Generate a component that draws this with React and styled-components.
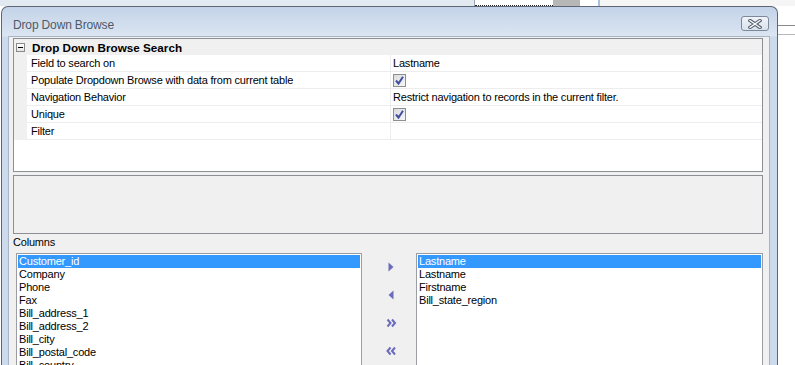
import React from "react";
import styled, { createGlobalStyle } from "styled-components";

const Global = createGlobalStyle`
  html, body { margin: 0; padding: 0; background: #fff; }
  * { box-sizing: border-box; }
`;

const Desktop = styled.div`
  position: relative;
  width: 795px;
  height: 365px;
  overflow: hidden;
  background: #fff;
  font-family: "Liberation Sans", Arial, sans-serif;
`;

const Backdrop = styled.div`
  display: flex;
  flex-direction: column;
`;

const TopStrip = styled.div`
  display: flex;
  height: 6px;
`;

const StripCell = styled.div`
  width: ${(p) => p.$w}px;
  flex: ${(p) => (p.$grow ? 1 : "none")};
  background: ${(p) => p.$bg};
  border-bottom: ${(p) => (p.$dots ? "1px dotted #222" : "none")};
`;

const RightLines = styled.div`
  margin-left: 778px;
  margin-top: 19px;
  height: 10px;
  border-top: 1px solid #8a8a8a;
  border-bottom: 1px solid #b8b8b8;
`;

const Window = styled.div`
  position: absolute;
  left: 1px;
  top: 6px;
  width: 777px;
  height: 372px;
  border: 1px solid #5d6672;
  border-bottom: none;
  border-radius: 7px 7px 0 0;
  background: linear-gradient(
    to bottom,
    #c3d3e8 0px,
    #dbe5f2 29px,
    #ccdaeb 30px,
    #ccdaeb 100%
  );
  display: flex;
  flex-direction: column;
  padding: 0 7px 0 6px;
`;

const TitleBar = styled.div`
  flex: none;
  height: 29px;
  display: flex;
  align-items: flex-start;
  justify-content: space-between;
  padding-left: 5px;
`;

const Title = styled.div`
  margin-top: 11px;
  font-size: 12px;
  line-height: 14px;
  color: #4f5a68;
  letter-spacing: -0.15px;
`;

const CloseButton = styled.div`
  margin-top: 9px;
  margin-right: 1px;
  width: 28px;
  height: 15px;
  border: 1px solid #7d8899;
  border-radius: 3px;
  background: linear-gradient(to bottom, #f1f4f9, #d9e1eb);
  display: flex;
  align-items: center;
  justify-content: center;
`;

const Client = styled.div`
  flex: 1;
  min-height: 0;
  overflow: hidden;
  background: #f0f0f0;
  border: 1px solid #a7b5c7;
  border-bottom: none;
  padding: 1px 6px 0 4px;
  display: flex;
  flex-direction: column;
  font-size: 11px;
  letter-spacing: -0.2px;
  color: #000;
  & > * {
    flex: none;
  }
`;

const Grid = styled.div`
  height: 134px;
  border: 1px solid #8c8f94;
  background: #fff;
  display: flex;
  flex-direction: column;
  & > * {
    flex: none;
  }
`;

const GridHeader = styled.div`
  height: 16px;
  background: #f0f0f0;
  display: flex;
  align-items: center;
`;

const Toggle = styled.div`
  width: 9px;
  height: 9px;
  margin-left: 2px;
  border: 1px solid #8a8a8a;
  background: linear-gradient(to bottom, #fff, #e4e4e4);
  display: flex;
  align-items: center;
  justify-content: center;
  &::after {
    content: "";
    width: 5px;
    height: 1px;
    background: #000;
  }
`;

const HeaderText = styled.div`
  margin-left: 7px;
  font-weight: bold;
  font-size: 11.7px;
  letter-spacing: 0;
`;

const Row = styled.div`
  display: flex;
  height: 17px;
`;

const Gutter = styled.div`
  width: 13px;
  background: #f0f0f0;
`;

const Label = styled.div`
  width: 363px;
  padding-left: 4px;
  border-bottom: 1px solid #ededed;
  line-height: 16px;
  white-space: nowrap;
`;

const Value = styled.div`
  flex: 1;
  padding-left: 2px;
  border-left: 1px solid #ededed;
  border-bottom: 1px solid #ededed;
  line-height: 16px;
  display: flex;
  align-items: center;
  white-space: nowrap;
`;

const CheckBox = styled.div`
  width: 13px;
  height: 13px;
  border: 1px solid #8e8f8f;
  background: linear-gradient(135deg, #dcdcdc, #f6f6f6);
  display: flex;
  align-items: center;
  justify-content: center;
`;

const DescBox = styled.div`
  margin-top: 3px;
  height: 59px;
  border: 1px solid #8c8f94;
  background: #f0f0f0;
`;

const SectionLabel = styled.div`
  margin-top: 1px;
  line-height: 14px;
  height: 14px;
`;

const ListsRow = styled.div`
  margin-top: 4px;
  display: flex;
  padding-left: 3px;
`;

const ListBox = styled.div`
  width: ${(p) => p.$w}px;
  height: 130px;
  border: 1px solid #9a9da2;
  background: #fff;
  padding: 1px;
  flex: none;
`;

const ListItem = styled.div`
  height: 13px;
  line-height: 13px;
  padding-left: 1px;
  white-space: nowrap;
  background: ${(p) => (p.$selected ? "#3399ff" : "transparent")};
  color: ${(p) => (p.$selected ? "#fff" : "#000")};
`;

const ButtonCol = styled.div`
  width: 54px;
  flex: none;
  display: flex;
  flex-direction: column;
  padding-left: 4px;
`;

const MoveButton = styled.div`
  height: 28px;
  display: flex;
  align-items: center;
  justify-content: center;
`;

const CloseIcon = () => (
  <svg width="14" height="10" viewBox="0 0 14 10">
    <path d="M2 1.5 L12 8.5 M12 1.5 L2 8.5" stroke="#56606f" strokeWidth="3.4" strokeLinecap="square" />
    <path d="M2 1.5 L12 8.5 M12 1.5 L2 8.5" stroke="#f7f9fc" strokeWidth="1.3" strokeLinecap="square" />
  </svg>
);

const CheckIcon = () => (
  <svg width="11" height="11" viewBox="0 0 11 11">
    <path d="M2 5.5 L4.5 8.5 L9 1.8" fill="none" stroke="#3e4fa3" strokeWidth="2" />
  </svg>
);

const ArrowColor = "#6b6bbd";

const RightArrow = () => (
  <svg width="6" height="10" viewBox="0 0 6 10">
    <path d="M0.5 0.5 L5.5 5 L0.5 9.5 Z" fill={ArrowColor} />
  </svg>
);

const LeftArrow = () => (
  <svg width="6" height="10" viewBox="0 0 6 10">
    <path d="M5.5 0.5 L0.5 5 L5.5 9.5 Z" fill={ArrowColor} />
  </svg>
);

const DoubleRight = () => (
  <svg width="11" height="10" viewBox="0 0 11 10">
    <path d="M1.5 1.5 L4.5 5 L1.5 8.5 M6 1.5 L9 5 L6 8.5" fill="none" stroke={ArrowColor} strokeWidth="2" />
  </svg>
);

const DoubleLeft = () => (
  <svg width="11" height="10" viewBox="0 0 11 10">
    <path d="M4.5 1.5 L1.5 5 L4.5 8.5 M9 1.5 L6 5 L9 8.5" fill="none" stroke={ArrowColor} strokeWidth="2" />
  </svg>
);

const properties = [
  { label: "Field to search on", value: "Lastname" },
  { label: "Populate Dropdown Browse with data from current table", check: true },
  { label: "Navigation Behavior", value: "Restrict navigation to records in the current filter." },
  { label: "Unique", check: true },
  { label: "Filter", value: "" },
];

const available = [
  "Customer_id",
  "Company",
  "Phone",
  "Fax",
  "Bill_address_1",
  "Bill_address_2",
  "Bill_city",
  "Bill_postal_code",
  "Bill_country",
  "Bill_state_region",
];

const selected = ["Lastname", "Lastname", "Firstname", "Bill_state_region"];

export default function App() {
  return (
    <Desktop>
      <Global />
      <Backdrop>
        <TopStrip>
          <StripCell $w={474} $bg="#e3e9f1" />
          <StripCell $w={1} $bg="#9aa5b3" />
          <StripCell $w={78} $bg="#ffffff" $dots />
          <StripCell $w={27} $bg="#b7b7b7" />
          <StripCell $w={18} $bg="#ffffff" />
          <StripCell $w={2} $bg="#a9c1dd" />
          <StripCell $grow $bg="#f5f5f5" />
        </TopStrip>
        <RightLines />
      </Backdrop>
      <Window>
        <TitleBar>
          <Title>Drop Down Browse</Title>
          <CloseButton>
            <CloseIcon />
          </CloseButton>
        </TitleBar>
        <Client>
          <Grid>
            <GridHeader>
              <Toggle />
              <HeaderText>Drop Down Browse Search</HeaderText>
            </GridHeader>
            {properties.map((p, i) => (
              <Row key={i}>
                <Gutter />
                <Label>{p.label}</Label>
                <Value>
                  {p.check ? (
                    <CheckBox>
                      <CheckIcon />
                    </CheckBox>
                  ) : (
                    p.value
                  )}
                </Value>
              </Row>
            ))}
          </Grid>
          <DescBox />
          <SectionLabel>Columns</SectionLabel>
          <ListsRow>
            <ListBox $w={346}>
              {available.map((c, i) => (
                <ListItem key={i} $selected={i === 0}>
                  {c}
                </ListItem>
              ))}
            </ListBox>
            <ButtonCol>
              <MoveButton><RightArrow /></MoveButton>
              <MoveButton><LeftArrow /></MoveButton>
              <MoveButton><DoubleRight /></MoveButton>
              <MoveButton><DoubleLeft /></MoveButton>
            </ButtonCol>
            <ListBox $w={347}>
              {selected.map((c, i) => (
                <ListItem key={i} $selected={i === 0}>
                  {c}
                </ListItem>
              ))}
            </ListBox>
          </ListsRow>
        </Client>
      </Window>
    </Desktop>
  );
}
